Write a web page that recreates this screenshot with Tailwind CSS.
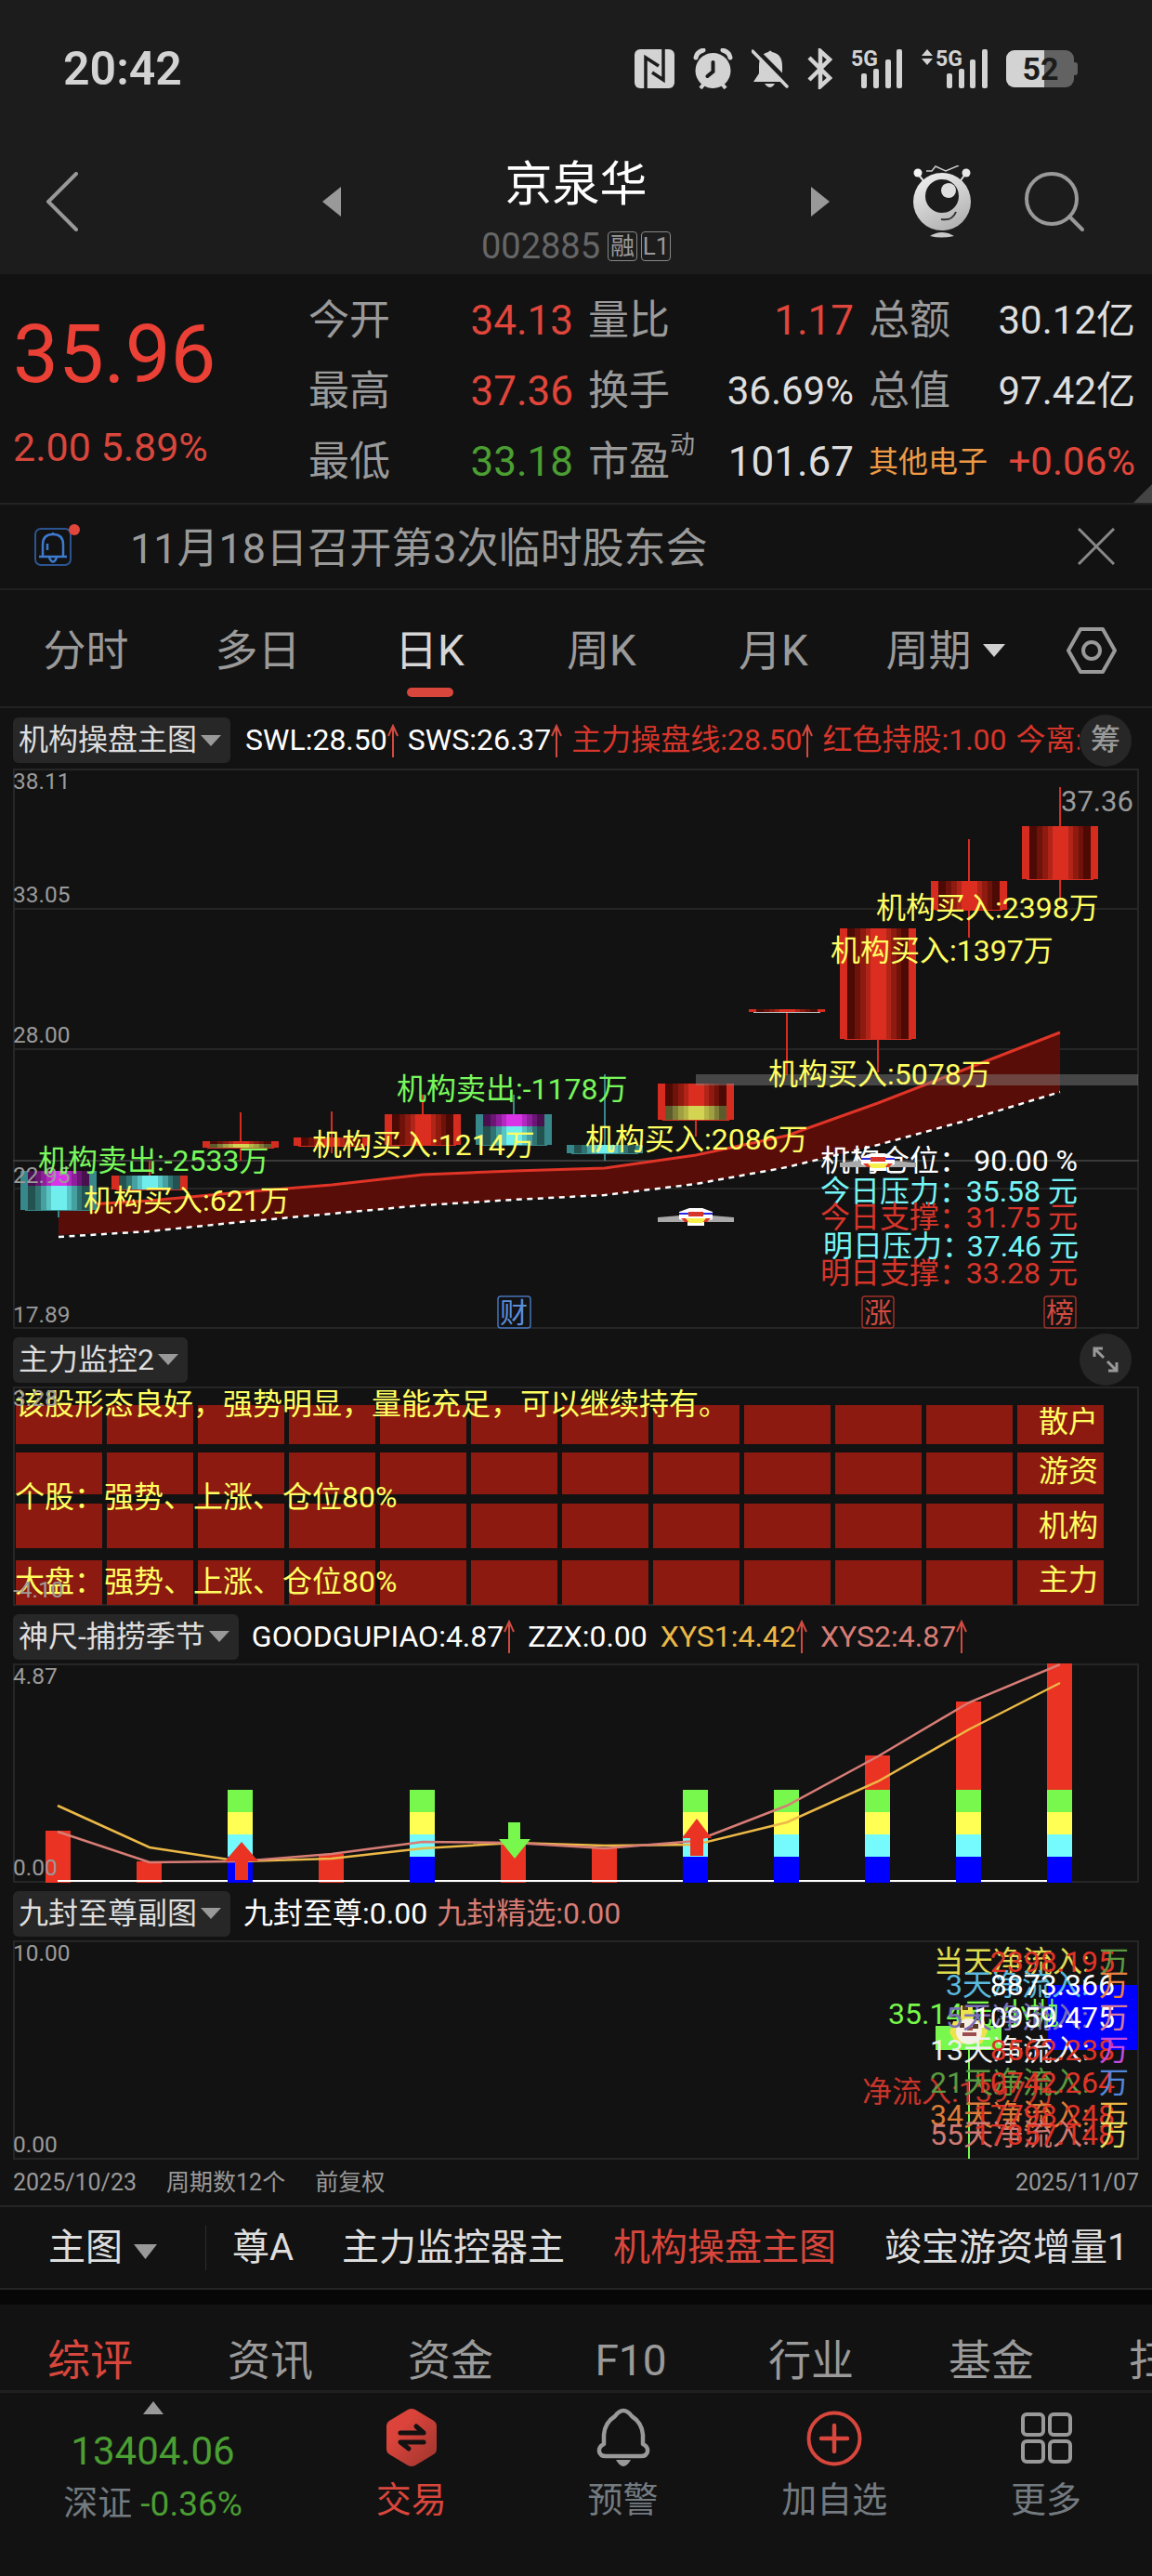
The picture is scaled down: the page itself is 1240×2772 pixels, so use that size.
<!DOCTYPE html>
<html lang="zh-CN">
<head>
<meta charset="UTF-8">
<meta name="viewport" content="width=device-width, initial-scale=1.0">
<title>京泉华 002885</title>
<script src="https://cdn.jsdelivr.net/npm/@tailwindcss/browser@4"></script>
</head>
<body class="bg-[#121212] text-[#9a9a9a] font-['Roboto','Noto_Sans_CJK_SC',sans-serif]">

<!-- Header -->
<header class="bg-[#1c1c1c]">
    <div class="h-[148px] pl-[68px] pr-20 flex items-center justify-between text-[#d3d3d3]">
        <span class="text-[50px] font-semibold">20:42</span>
        <div class="flex items-center gap-5">
            <svg class="w-[43px] h-[42px]" viewBox="0 0 43 42" fill="none">
                <rect width="43" height="42" rx="6" fill="#d3d3d3"/>
                <path d="M12 42V9l14 9M31 0v33L19 25" stroke="#1c1c1c" stroke-width="3.5"/>
            </svg>
            <svg class="w-[43px] h-11" viewBox="0 0 43 44" fill="none">
                <circle cx="21.500" cy="24" r="19" fill="#d3d3d3"/>
                <path d="M3 10Q4 4 11 2M40 10Q39 4 32 2" stroke="#d3d3d3" stroke-width="5" stroke-linecap="round"/>
                <path d="M12 38l-4 5M31 38l4 5" stroke="#d3d3d3" stroke-width="4"/>
                <path d="M21.500 15v10l-6 5" stroke="#1c1c1c" stroke-width="4" stroke-linecap="round"/>
            </svg>
            <svg class="w-10 h-[42px]" viewBox="0 0 40 42" fill="none">
                <path d="M18 3q2-3 4 0q11 2 11 15v8l7 9H2l6-9v-8Q8 5 18 3z" fill="#d3d3d3"/>
                <path d="M14 37h11q-5 8-11 0z" fill="#d3d3d3"/>
                <path d="M3-1L42 38" stroke="#1c1c1c" stroke-width="5"/>
                <path d="M1 2L38 40" stroke="#d3d3d3" stroke-width="3.500" stroke-linecap="round"/>
            </svg>
            <svg class="w-[27px] h-11" viewBox="0 0 27 44" fill="none" stroke="#d3d3d3" stroke-width="4.500">
                <path d="M2 10l22 22-10 9V3l10 9L2 34"/>
            </svg>
            <svg class="w-14 h-[43px] overflow-visible" viewBox="0 0 56 43" fill="#d3d3d3">
                <text x="0" y="18" font-size="23" font-weight="700">5G</text>
                <rect x="11" y="26" width="6" height="16" rx="2"/><rect x="24" y="21" width="6" height="21" rx="2"/><rect x="37" y="11" width="6" height="31" rx="2"/><rect x="49" y="0" width="6" height="42" rx="2"/>
            </svg>
            <svg class="w-[71px] h-[43px] overflow-visible" viewBox="0 0 71 43" fill="#d3d3d3">
                <path d="M6 0l6 7H0zM6 17l6-7H0z"/>
                <text x="15" y="18" font-size="23" font-weight="700">5G</text>
                <rect x="27" y="26" width="6" height="16" rx="2"/><rect x="40" y="21" width="6" height="21" rx="2"/><rect x="52" y="11" width="6" height="31" rx="2"/><rect x="65" y="0" width="6" height="42" rx="2"/>
            </svg>
            <svg class="w-[77px] h-10" viewBox="0 0 77 40">
                <rect width="73" height="40" rx="9" fill="#626262"/><rect x="71" y="13" width="6" height="14" rx="3" fill="#626262"/>
                <path d="M9 0H41V40H9a9 9 0 0 1-9-9V9a9 9 0 0 1 9-9z" fill="#d3d3d3"/>
                <text x="37" y="32" font-size="34" font-weight="700" fill="#1c1c1c" text-anchor="middle">52</text>
            </svg>
        </div>
    </div>
    <div class="h-[147px] pb-2.5 grid grid-cols-[1fr_546px_1fr] items-center">
        <div class="pl-[50px]">
            <button aria-label="返回" class="block">
                <svg class="w-9 h-16" viewBox="0 0 36 64" fill="none" stroke="#999" stroke-width="4" stroke-linecap="round"><path d="M32 2L2 32l30 30"/></svg>
            </button>
        </div>
        <div class="flex items-center justify-between">
            <button aria-label="上一只"><svg class="w-5 h-8" viewBox="0 0 20 32" fill="#999"><path d="M20 0v32L0 16z"/></svg></button>
            <div class="pt-5 flex flex-col items-center gap-4">
                <h1 class="text-[51px] leading-[60px] text-white">京泉华</h1>
                <div class="h-10 flex items-center gap-1 text-[38px] leading-10 text-[#666]">
                    <span class="mr-1">002885</span>
                    <span class="w-8 h-8 border border-[#888] rounded-sm text-[26px] leading-[30px] text-center text-[#999]">融</span>
                    <span class="w-8 h-8 border border-[#888] rounded-sm text-[26px] leading-[30px] text-center text-[#999]">L1</span>
                </div>
            </div>
            <button aria-label="下一只"><svg class="w-5 h-8" viewBox="0 0 20 32" fill="#999"><path d="M0 0v32l20-16z"/></svg></button>
        </div>
        <div class="pr-[72px] flex items-center justify-end gap-[57px]">
            <button aria-label="助手">
                <svg class="w-[62px] h-[78px]" viewBox="0 0 62 78" fill="none">
                    <defs><linearGradient id="bot" x1="0" y1="0" x2="0.500" y2="1"><stop offset="0" stop-color="#f4f4f4"/><stop offset="1" stop-color="#b5b5b5"/></linearGradient></defs>
                    <path d="M14 6h6l4-5 11 5L49 0" stroke="#ccc" stroke-width="1.500"/>
                    <path d="M4 8l9 11M57 8l-8 11" stroke="#ddd" stroke-width="2"/>
                    <circle cx="5" cy="8" r="4.500" fill="#f4f4f4"/><circle cx="57" cy="8" r="4.500" fill="#e8e8e8"/>
                    <circle cx="31" cy="39" r="31" fill="url(#bot)"/>
                    <circle cx="31" cy="33" r="18" fill="#1c1c1c"/>
                    <circle cx="38" cy="27" r="8" fill="#dedede"/>
                    <path d="M30 58q12 2 16-8" stroke="#333" stroke-width="2"/>
                    <path d="M18 76q13-8 26 0q-13 3-26 0z" fill="#c8c8c8"/>
                </svg>
            </button>
            <button aria-label="搜索">
                <svg class="w-[66px] h-[66px]" viewBox="0 0 66 66" fill="none" stroke="#999" stroke-width="4" stroke-linecap="round"><circle cx="30" cy="30" r="27"/><path d="M49 49l14 14"/></svg>
            </button>
        </div>
    </div>
</header>

<!-- Quote -->
<section class="relative h-[248px] pl-3.5 pr-[18px] pt-3 pb-1.5 flex border-b-2 border-[#242424] text-[44px]">
    <div class="w-[318px] pt-6 flex flex-col">
        <strong class="text-[87px] leading-[100px] font-normal text-[#ea4035]">35.96</strong>
        <span class="pt-[18px] text-[43px] leading-[64px] text-[#d8463c]">2.00 5.89%</span>
    </div>
    <dl class="flex-1 grid grid-cols-[285px_286px_1fr] grid-rows-3 gap-x-4 leading-[76px] whitespace-nowrap">
        <div class="flex justify-between"><dt>今开</dt><dd class="text-[#e0463b]">34.13</dd></div>
        <div class="flex justify-between"><dt>量比</dt><dd class="text-[#e0463b]">1.17</dd></div>
        <div class="flex justify-between"><dt>总额</dt><dd class="text-[42px] text-[#dedede]">30.12亿</dd></div>
        <div class="flex justify-between"><dt>最高</dt><dd class="text-[#e0463b]">37.36</dd></div>
        <div class="flex justify-between"><dt>换手</dt><dd class="text-[42px] text-[#dedede]">36.69%</dd></div>
        <div class="flex justify-between"><dt>总值</dt><dd class="text-[42px] text-[#dedede]">97.42亿</dd></div>
        <div class="flex justify-between"><dt>最低</dt><dd class="text-[#4a9e32]">33.18</dd></div>
        <div class="flex justify-between"><dt class="flex">市盈<span class="text-[27px] leading-10">动</span></dt><dd class="text-[#dedede]">101.67</dd></div>
        <div class="flex justify-between"><dt class="text-[32px] text-[#ee9a45]">其他电子</dt><dd class="text-[42px] text-[#e0463b]">+0.06%</dd></div>
    </dl>
    <svg class="absolute right-0 bottom-0 w-5 h-5" viewBox="0 0 20 20" fill="#444"><path d="M20 0v20H0z"/></svg>
</section>

<!-- Notice -->
<section class="h-[92px] pl-9 pr-10 flex items-center border-b-2 border-[#1f1f1f]">
    <svg class="w-[50px] h-[50px] shrink-0" viewBox="0 0 50 50" fill="none" stroke="#3d7bd0">
        <rect x="2" y="6" width="38" height="39" rx="6" stroke="#2c5590" stroke-width="2"/>
        <path d="M21 10v2M10 35V23q0-11 11-11t11 11v12M6 36h30M17 37q4 9 8 0M15 22v7" stroke-width="2.500"/>
        <circle cx="44" cy="7" r="6" fill="#e0463b" stroke="none"/>
    </svg>
    <a href="#" class="flex-1 pl-[54px] pt-1.5 text-[45px] leading-[60px]">11月18日召开第3次临时股东会</a>
    <button aria-label="关闭">
        <svg class="w-10 h-10" viewBox="0 0 40 40" stroke="#888" stroke-width="3"><path d="M1 1l38 38M39 1L1 39"/></svg>
    </button>
</section>

<!-- Period tabs -->
<nav class="h-[127px] pt-1 flex items-center border-b-2 border-[#222] text-[46px] leading-[60px]">
    <button class="flex-1">分时</button>
    <button class="flex-1">多日</button>
    <button class="flex-1 relative text-[#d6d6d6]">日K<span class="absolute left-1/2 -translate-x-1/2 top-[70px] w-[50px] h-2.5 rounded-full bg-[#d8463c]"></span></button>
    <button class="flex-1">周K</button>
    <button class="flex-1">月K</button>
    <button class="flex-1 flex items-center justify-center gap-3">周期<svg class="w-6 h-3.5" viewBox="0 0 24 14" fill="#d0d0d0"><path d="M0 0h24L12 14z"/></svg></button>
    <button aria-label="设置" class="w-[130px] flex justify-center">
        <svg class="w-[54px] h-[50px]" viewBox="0 0 54 50" fill="none" stroke="#999" stroke-width="4" stroke-linejoin="round"><path d="M15 2h24l13 23-13 23H15L2 25z"/><circle cx="27" cy="25" r="9"/></svg>
    </button>
</nav>

<main class="px-3.5">
    <!-- Main chart -->
    <div class="h-[65px] pt-1 flex items-center gap-4 text-[32px] leading-[49px] whitespace-nowrap">
        <button class="shrink-0 px-1.5 flex items-center rounded-md bg-[#272727] text-[#dedede]">机构操盘主图<svg class="mx-1 w-[22px] h-3" viewBox="0 0 22 12" fill="#999"><path d="M0 0h22L11 12z"/></svg></button>
        <div class="flex-1 min-w-0 overflow-hidden flex gap-2.5 text-[#d8352a]">
            <span class="flex items-center text-white">SWL:28.50<svg class="w-3 h-9" viewBox="0 0 12 36" fill="none" stroke="#d04a40" stroke-width="2"><path d="M6 36V2M1 13L6 2l5 11"/></svg></span>
            <span class="flex items-center text-white">SWS:26.37<svg class="w-3 h-9" viewBox="0 0 12 36" fill="none" stroke="#d04a40" stroke-width="2"><path d="M6 36V2M1 13L6 2l5 11"/></svg></span>
            <span class="flex items-center">主力操盘线:28.50<svg class="w-3 h-9" viewBox="0 0 12 36" fill="none" stroke="#d04a40" stroke-width="2"><path d="M6 36V2M1 13L6 2l5 11"/></svg></span>
            <span>红色持股:1.00</span>
            <span>今离:</span>
        </div>
        <button class="shrink-0 -ml-4 mr-2 w-14 h-14 rounded-full bg-[#272727] text-[#999] font-medium">筹</button>
    </div>
    <svg class="w-full h-auto" viewBox="14 827 1212 603" font-size="32">
        <defs id="bands"></defs>
        <g fill="none" stroke="#262626" stroke-width="2">
            <rect x="15" y="828" width="1210" height="601"/>
            <path d="M14 978H1226M14 1129H1226M14 1279H1226"/>
            <path d="M14 1249H1226" stroke="#3a3a3a"/>
        </g>
        <path fill="#590d08" d="M63 1298L161 1292 259 1283 357 1275 455 1264 553 1260 651 1257 749 1243 847 1222 945 1187 1043 1149 1141 1111V1175L1043 1205 945 1232 847 1256 749 1274 651 1286 553 1291 455 1297 357 1306 259 1315 161 1325 63 1329z"/>
        <path fill="none" stroke="#fff" stroke-width="2.500" stroke-dasharray="6 5.500" d="M63 1331L161 1325 259 1315 357 1306 455 1297 553 1291 651 1286 749 1274 847 1256 945 1232 1043 1205 1141 1175"/>
        <path fill="none" stroke="#e03427" stroke-width="3" d="M63 1298L161 1292 259 1283 357 1275 455 1264 553 1260 651 1257 749 1243 847 1222 945 1187 1043 1149 1141 1111"/>
        <g id="candles"></g>
        <g font-size="24.500" fill="#9a9a9a">
            <text x="14" y="849">38.11</text><text x="14" y="971">33.05</text><text x="14" y="1122">28.00</text><text x="14" y="1273">22.95</text><text x="14" y="1423">17.89</text>
        </g>
        <rect x="749" y="1156" width="476" height="12" fill="#888" fill-opacity="0.450"/>
        <g fill="#fff">
            <text x="883" y="1260">机构仓位：</text><text x="1160" y="1260" text-anchor="end">90.00 %</text>
        </g>
        <g id="ufos"></g>
        <g fill="#76f4f6"><text x="883" y="1293">今日压力：</text><text x="1160" y="1293" text-anchor="end">35.58 元</text><text x="886" y="1352">明日压力：</text><text x="1161" y="1352" text-anchor="end">37.46 元</text></g>
        <g fill="#d8352a"><text x="883" y="1321">今日支撑：</text><text x="1160" y="1321" text-anchor="end">31.75 元</text><text x="883" y="1381">明日支撑：</text><text x="1160" y="1381" text-anchor="end">33.28 元</text></g>
        <g fill="#ffff62">
            <text x="90" y="1303">机构买入:621万</text><text x="336" y="1243">机构买入:1214万</text><text x="630" y="1237">机构买入:2086万</text><text x="827" y="1167">机构买入:5078万</text><text x="943" y="988">机构买入:2398万</text><text x="894" y="1034">机构买入:1397万</text>
        </g>
        <g fill="#78f85c"><text x="41" y="1260">机构卖出:-2533万</text><text x="427" y="1183">机构卖出:-1178万</text></g>
        <text x="1142" y="873" font-size="31" fill="#9a9a9a">37.36</text>
        <g font-size="30" text-anchor="middle" stroke-width="1.500">
            <rect x="536" y="1395" width="35" height="34" rx="3" fill="none" stroke="#4574bb"/><text x="553" y="1423" fill="#5b8edb">财</text>
            <rect x="928" y="1395" width="34" height="34" rx="3" fill="none" stroke="#9c3129"/><text x="945" y="1423" fill="#d04a40">涨</text>
            <rect x="1124" y="1395" width="34" height="34" rx="3" fill="none" stroke="#9c3129"/><text x="1141" y="1423" fill="#d04a40">榜</text>
        </g>
    </svg>

    <!-- 主力监控 -->
    <div class="h-[62px] pt-1 flex items-center justify-between text-[32px] leading-[49px]">
        <button class="px-1.5 flex items-center rounded-md bg-[#272727] text-[#dedede]">主力监控2<svg class="mx-1 w-[22px] h-3" viewBox="0 0 22 12" fill="#999"><path d="M0 0h22L11 12z"/></svg></button>
        <button aria-label="全屏" class="mr-2 w-14 h-14 rounded-full bg-[#272727] flex items-center justify-center">
            <svg class="w-7 h-7" viewBox="0 0 28 28" fill="none" stroke="#999" stroke-width="3"><path d="M11 2H2v9M2 2l10 10M17 26h9v-9M26 26L16 16"/></svg>
        </button>
    </div>
    <svg class="w-full h-auto" viewBox="14 1492 1212 236" font-size="32">
        <rect x="15" y="1493" width="1210" height="234" fill="none" stroke="#262626" stroke-width="2"/>
        <g id="cells" fill="#8c1a10"></g>
        <g fill="#ffff62">
            <text x="16" y="1522">该股形态良好，强势明显，量能充足，可以继续持有。</text>
            <text x="16" y="1622">个股：强势、上涨、仓位80%</text>
            <text x="16" y="1713">大盘：强势、上涨、仓位80%</text>
            <text x="1118" y="1541">散户</text><text x="1118" y="1594">游资</text><text x="1118" y="1653">机构</text><text x="1118" y="1711">主力</text>
        </g>
        <g font-size="24.500" fill="#a09a9a"><text x="14" y="1513">3.28</text><text x="14" y="1719">-4.10</text></g>
    </svg>

    <!-- 捕捞季节 -->
    <div class="h-[62px] pt-1 flex items-center gap-3.5 text-[32px] leading-[49px] whitespace-nowrap">
        <button class="shrink-0 px-1.5 flex items-center rounded-md bg-[#272727] text-[#dedede]">神尺-捕捞季节<svg class="mx-1 w-[22px] h-3" viewBox="0 0 22 12" fill="#999"><path d="M0 0h22L11 12z"/></svg></button>
        <div class="flex gap-3.5">
            <span class="flex items-center text-white">GOODGUPIAO:4.87<svg class="w-3 h-9" viewBox="0 0 12 36" fill="none" stroke="#d04a40" stroke-width="2"><path d="M6 36V2M1 13L6 2l5 11"/></svg></span>
            <span class="text-white">ZZX:0.00</span>
            <span class="flex items-center text-[#ecb947]">XYS1:4.42<svg class="w-3 h-9" viewBox="0 0 12 36" fill="none" stroke="#d04a40" stroke-width="2"><path d="M6 36V2M1 13L6 2l5 11"/></svg></span>
            <span class="flex items-center text-[#d87d76]">XYS2:4.87<svg class="w-3 h-9" viewBox="0 0 12 36" fill="none" stroke="#d04a40" stroke-width="2"><path d="M6 36V2M1 13L6 2l5 11"/></svg></span>
        </div>
    </div>
    <svg class="w-full h-auto" viewBox="14 1789 1212 236">
        <rect x="15" y="1790" width="1210" height="234" fill="none" stroke="#262626" stroke-width="2"/>
        <g id="bars"></g>
        <g font-size="24.500" fill="#9a9a9a"><text x="14" y="1811">4.87</text><text x="14" y="2017">0.00</text></g>
        <g fill="none" stroke-width="2.500">
            <path stroke="#ecb947" d="M62 1942L161 1987 259 2002 357 1999 455 1988 553 1982 651 1985 749 1984 847 1960 945 1916 1043 1860 1141 1810"/>
            <path stroke="#d87d76" d="M62 1970L161 2003 259 2002 357 1994 455 1981 553 1982 651 1988 749 1980 847 1942 945 1889 1043 1831 1141 1790"/>
        </g>
        <path fill="#ea3323" d="M260 1981L278 2002H267V2022H253V2002H242zM750 1956L766 1977H757V1996H743V1977H734z"/>
        <path fill="#78f84c" d="M554 1999L571 1978H560V1960H547V1978H537z"/>
    </svg>

    <!-- 九封至尊 -->
    <div class="h-[62px] pt-1 flex items-center gap-3.5 text-[32px] leading-[49px] whitespace-nowrap">
        <button class="shrink-0 px-1.5 flex items-center rounded-md bg-[#272727] text-[#dedede]">九封至尊副图<svg class="mx-1 w-[22px] h-3" viewBox="0 0 22 12" fill="#999"><path d="M0 0h22L11 12z"/></svg></button>
        <div class="flex gap-2.5">
            <span class="text-white">九封至尊:0.00</span>
            <span class="text-[#d87d76]">九封精选:0.00</span>
        </div>
    </div>
    <svg class="w-full h-auto" viewBox="14 2087 1212 236" font-size="32">
        <rect x="15" y="2088" width="1210" height="234" fill="none" stroke="#262626" stroke-width="2"/>
        <g font-size="24.500" fill="#9a9a9a"><text x="14" y="2109">10.00</text><text x="14" y="2315">0.00</text></g>
        <rect x="1128" y="2135" width="97" height="70" fill="#00f"/>
        <text x="956" y="2177" fill="#78f84c">35.14元 小抛</text>
        <path fill="#78f84c" d="M1007 2179h71v26h-34v117h-2v-117h-35z"/>
        <g>
            <path fill="#ece34a" d="M1034 2157h13v16h12l4 12-6 13h-28l-7-12 4-12h8z"/>
            <circle cx="1043" cy="2185" r="14" fill="#f6efe4"/>
            <path fill="#5a3a22" d="M1036 2157h6v5h-6zM1033 2176h5v5h-5zM1047 2177h6v5h-6z"/>
            <path fill="#9c4c50" d="M1036 2186h15v4h-15zM1041 2180h6v4h-6z"/>
        </g>
        <text x="928" y="2261" fill="#c8352a">净流入:1397万</text>
        <g id="flows"></g>
    </svg>
    <div class="h-[49px] flex items-center gap-8 text-[25px]">
        <span>2025/10/23</span><span>周期数12个</span><span>前复权</span><span class="ml-auto">2025/11/07</span>
    </div>
</main>

<!-- Indicator picker -->
<nav class="h-[91px] pl-[52px] flex items-center border-y-2 border-[#242424] text-[40px] text-[#dedede] whitespace-nowrap overflow-hidden">
    <button class="shrink-0 flex items-center gap-3">主图<svg class="w-[25px] h-4 mt-2" viewBox="0 0 25 16" fill="#999"><path d="M0 0h25L12.500 16z"/></svg></button>
    <div class="ml-[52px] h-12 pl-7 flex items-center gap-[52px] border-l border-[#2c2c2c]">
        <button>尊A</button>
        <button>主力监控器主</button>
        <button class="text-[#d8463c]">机构操盘主图</button>
        <button>竣宝游资增量1</button>
    </div>
</nav>
<div class="h-4 bg-[#070707]"></div>

<nav class="h-[95px] pt-7 pl-[51px] flex border-b-[3px] border-[#1f1f1f] text-[46px] leading-[64px] whitespace-nowrap overflow-hidden">
    <a href="#" class="w-[92px] mr-[102px] shrink-0 text-center text-[#d8463c]">综评</a>
    <a href="#" class="w-[92px] mr-[102px] shrink-0 text-center">资讯</a>
    <a href="#" class="w-[92px] mr-[102px] shrink-0 text-center">资金</a>
    <a href="#" class="w-[92px] mr-[102px] shrink-0 text-center">F10</a>
    <a href="#" class="w-[92px] mr-[102px] shrink-0 text-center">行业</a>
    <a href="#" class="w-[92px] mr-[102px] shrink-0 text-center">基金</a>
    <a href="#" class="w-[92px] shrink-0 text-center">扫雷</a>
</nav>

<!-- Bottom bar -->
<footer class="h-[199px] flex text-[38px] leading-[46px] text-[#737a80]">
    <a href="#" class="w-[329px] pt-[9px] flex flex-col items-center">
        <svg class="w-[22px] h-3.5" viewBox="0 0 22 14" fill="#999"><path d="M11 0l11 14H0z"/></svg>
        <span class="pt-3 text-[42px] leading-[56px] text-[#4a9e32]">13404.06</span>
        <span class="pt-1.5 text-[37px] whitespace-nowrap">深证 <span class="text-[#4a9e32]">-0.36%</span></span>
    </a>
    <a href="#" class="flex-1 pt-4 flex flex-col items-center gap-3 text-[#d8463c]">
        <svg class="w-16 h-16" viewBox="0 0 64 64" fill="none">
            <defs><linearGradient id="hex" x1="0" y1="0" x2="1" y2="1"><stop offset="0.300" stop-color="#dc443b"/><stop offset="1" stop-color="#9c352e"/></linearGradient></defs>
            <path d="M28 2q4-2 8 0l20 12q3 2 3 5v26q0 3-3 5L36 62q-4 2-8 0L8 50q-3-2-3-5V19q0-3 3-5z" fill="url(#hex)"/>
            <path d="M20 27h25L37 20M45 37H20l9 7" stroke="#121212" stroke-width="5" stroke-linecap="round" stroke-linejoin="round"/>
        </svg>
        <span>交易</span>
    </a>
    <a href="#" class="flex-1 pt-4 flex flex-col items-center gap-3">
        <svg class="w-16 h-16" viewBox="0 0 64 64" fill="none">
            <path d="M23 9q9-12 18 0q11 7 12 20v10q6 3 5 8t-7 5H13q-6 0-7-5t5-8V29Q12 16 23 9z" stroke="#999" stroke-width="4.500" stroke-linejoin="round"/>
            <path d="M24 56h16q-8 14-16 0z" fill="#999"/>
        </svg>
        <span>预警</span>
    </a>
    <a href="#" class="flex-1 pt-4 flex flex-col items-center gap-3">
        <svg class="w-16 h-16" viewBox="0 0 64 64" fill="none" stroke="#d8463c" stroke-width="4" stroke-linecap="round"><circle cx="32" cy="33" r="27.500"/><path d="M32 19v28M18 33h28" stroke-width="4.500"/></svg>
        <span>加自选</span>
    </a>
    <a href="#" class="flex-1 pt-4 flex flex-col items-center gap-3">
        <svg class="w-16 h-16" viewBox="0 0 64 64" fill="none" stroke="#999" stroke-width="4"><rect x="7" y="7" width="22" height="22" rx="4"/><rect x="36" y="7" width="22" height="22" rx="4"/><rect x="7" y="36" width="22" height="22" rx="4"/><rect x="36" y="36" width="22" height="22" rx="4"/></svg>
        <span>更多</span>
    </a>
</footer>

<script>
// x of the n-th trading day
function dayX(i) { return 63 + i * 98; }
function rect(x, y, w, h, fill) {
    return '<rect x="' + x + '" y="' + y + '" width="' + w + '" height="' + h + '" fill="' + fill + '"/>';
}

// stepped gradients for candle bodies, dark edge to bright middle
var palettes = {
    red: ['#4d0a04', '#6e120a', '#8e1a10', '#b02518', '#dc2e20'],
    teal: ['#245250', '#2f7472', '#45a09f', '#58c4c4', '#70eeee'],
    magenta: ['#48104f', '#6b1575', '#8f1e9c', '#b428c2', '#da34e8'],
    yellow: ['#5c5b2c', '#7f7e38', '#a09f42', '#b6b548', '#d4d453']
};
var steps = [0, 12, 21, 30, 38, 63, 71, 80, 88, 100];
var order = [0, 1, 2, 3, 4, 3, 2, 1, 0];
document.getElementById('bands').innerHTML = Object.keys(palettes).map(function(name) {
    return '<linearGradient id="' + name + '">' + order.map(function(c, i) {
        var col = palettes[name][c];
        return '<stop offset="' + steps[i] + '%" stop-color="' + col + '"/><stop offset="' + steps[i + 1] + '%" stop-color="' + col + '"/>';
    }).join('') + '</linearGradient>';
}).join('');

// high, top, bottom, low, edge, fill, [band colour, band top, band bottom]
var R = '#d62c20', T = '#37888a';
var candles = [
    [1260, 1260, 1302, 1310, T, 'teal', 'magenta', 1260, 1276],
    [1249, 1265, 1280, 1280, R, 'teal'],
    [1197, 1228, 1235, 1249, R, 'red', 'yellow', 1231, 1236],
    [1196, 1224, 1233, 1241, R, 'red'],
    [1178, 1199, 1232, 1232, R, 'red'],
    [1178, 1199, 1232, 1232, T, 'teal', 'magenta', 1199, 1212],
    [1156, 1232, 1241, 1249, T, 'teal'],
    [1166, 1166, 1205, 1223, R, 'red', 'yellow', 1190, 1205],
    [1086, 1086, 1089, 1157, R, 'red'],
    [999, 999, 1118, 1154, R, 'red'],
    [903, 948, 979, 1009, R, 'red'],
    [847, 889, 946, 970, R, 'red']
];
document.getElementById('candles').innerHTML = candles.map(function(c, i) {
    var x = dayX(i), h = c[2] - c[1];
    return rect(x - 1, c[0], 2, c[3] - c[0], c[4]) +
        rect(x - 41, c[1], 82, h, c[4]) +
        rect(x - 33, c[1], 66, h, 'url(#' + c[5] + ')') +
        (c[6] ? rect(x - 33, c[7], 66, c[8] - c[7], 'url(#' + c[6] + ')') : '') +
        rect(x - 36, c[2], 72, 1, i === 8 ? '#bbb' : c[4]);
}).join('');

document.getElementById('ufos').innerHTML = [[749, 1300], [945, 1241]].map(function(p) {
    return '<g transform="translate(' + (p[0] - 41) + ' ' + p[1] + ')">' +
        '<path fill="#a9a9a9" d="M0 10l24-2h34l24 2v5H0z"/>' +
        '<path fill="#fff" d="M23 4l11-4h14l11 4v8l-9 3v4H32v-4l-9-3z"/>' +
        '<path fill="#2a2ae0" d="M23 5h36v2H23z"/>' +
        '<path fill="#d8352a" d="M33 4h16v5H33zM25 11h32l-4 4H29z"/>' +
        '<path fill="#f8f04a" d="M30 11h22l-4 5H34z"/></g>';
}).join('');

// twelve days, four kinds of holder
var rows = [[1512, 42], [1563, 45], [1618, 48], [1679, 48]];
document.getElementById('cells').innerHTML = rows.map(function(r) {
    var s = '';
    for (var i = 0; i < 12; i++) s += rect(17 + i * 98, r[0], 93, r[1], '#8c1a10');
    return s;
}).join('');

var tops = [1969, 2002, 0, 1994, 0, 1982, 1987, 0, 0, 1888, 1830, 1789];
var stacked = [2, 4, 7, 8, 9, 10, 11];
document.getElementById('bars').innerHTML =
    tops.map(function(t, i) { return t ? rect(dayX(i) - 14, t, 27, 2025 - t, '#ea3323') : ''; }).join('') +
    rect(62, 2022, 1079, 2, '#fff') +
    stacked.map(function(i) {
        var x = dayX(i) - 14;
        return rect(x, 1925, 27, 25, '#78f84c') + rect(x, 1949, 27, 24, '#ffff54') + rect(x, 1973, 27, 24, '#75fbfd') + rect(x, 1997, 27, 28, '#00f');
    }).join('');

// net inflow lines: label, x, baseline, colour, amount, amount colour, unit colour
var flows = [
    ['当天净流入:', 1005, 2121, '#e0dc50', '2398.195', '#e03427', '#5a9a40'],
    ['3天净流入:', 1018, 2146, '#5ab9dc', '8873.366', '#fff', '#ec8040'],
    ['5天净流入:', 1018, 2181, '#7a6fb8', '10959.475', '#fff', '#d87d96'],
    ['13天净流入:', 1001, 2216, '#f0f0f0', '8562.238', '#e03427', '#c44ae0'],
    ['21天净流入:', 1001, 2251, '#5a9a40', '10742.264', '#e03427', '#5286dc'],
    ['34天净流入:', 1001, 2286, '#dc7c38', '17798.248', '#e03427', '#ecb947'],
    ['55天净流入:', 1001, 2307, '#d07a74', '17357.148', '#e03427', '#e8e060']
];
document.getElementById('flows').innerHTML = flows.map(function(f) {
    return '<text x="' + f[1] + '" y="' + f[2] + '" fill="' + f[3] + '">' + f[0] + '</text>' +
        '<text x="1200" y="' + f[2] + '" text-anchor="end" fill="' + f[5] + '">' + f[4] + '</text>' +
        '<text x="1183" y="' + f[2] + '" fill="' + f[6] + '">万</text>';
}).join('');
</script>
</body>
</html>
